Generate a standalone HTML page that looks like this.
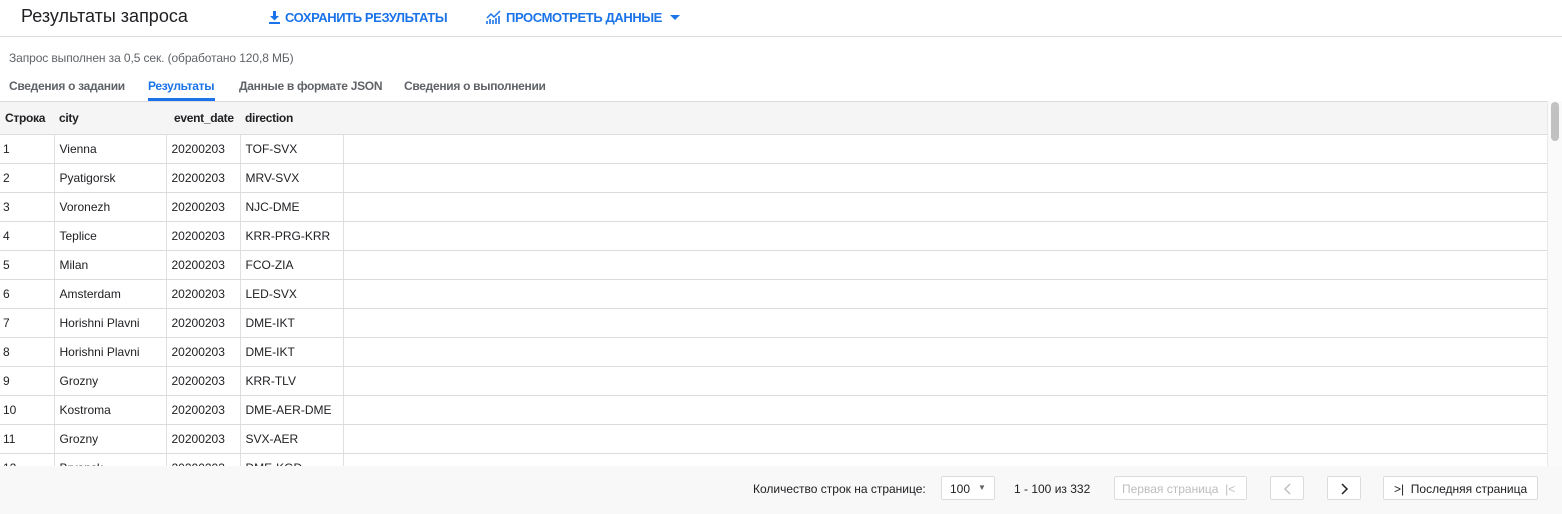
<!DOCTYPE html>
<html><head><meta charset="utf-8"><style>
*{box-sizing:border-box;margin:0;padding:0}
body{width:1562px;height:514px;overflow:hidden;background:#fff;font-family:"Liberation Sans",Roboto,sans-serif;color:#202124;position:relative}
.hdr{position:absolute;left:0;top:0;width:1562px;height:37px;border-bottom:1px solid #dadce0}
.title{position:absolute;left:21px;top:6px;font-size:18px;color:#202124}
.btn{position:absolute;top:10px;font-size:13px;color:#1a73e8;font-weight:bold;letter-spacing:-0.4px}
.info{position:absolute;left:9px;top:51px;font-size:12px;color:#5f6368;letter-spacing:-0.1px}
.tab{position:absolute;top:79px;font-size:12px;color:#5f6368;font-weight:bold;letter-spacing:-0.3px}
.tab.a{color:#1a73e8}
.ul{position:absolute;left:148px;top:98px;width:67px;height:3px;background:#1a73e8}
.tline{position:absolute;left:0;top:101px;width:1547px;height:1px;background:#dadce0}
table{position:absolute;left:0;top:102px;border-collapse:collapse;font-size:12px;width:1547px;table-layout:fixed}
th{background:#f5f5f5;height:32px;text-align:left;font-weight:bold;padding-left:5px;border-bottom:1px solid #dadce0;color:#202124;letter-spacing:-0.3px}
td{height:29px;border-bottom:1px solid #dadce0;border-right:1px solid #e0e0e0;padding-left:5px;color:#202124;white-space:nowrap;overflow:hidden}
td:first-child{padding-left:3px}
td:last-child{border-right:none}
.sb{position:absolute;left:1547px;top:101px;width:15px;height:365px;background:#fafafa;border-left:1px solid #e8e8e8}
.thumb{position:absolute;left:1551px;top:102px;width:8px;height:39px;background:#c1c1c1;border-radius:4px}
.ft{position:absolute;left:0;top:466px;width:1562px;height:48px;background:#f8f8f8;font-size:12px;color:#202124}
.ft span,.ft div{position:absolute}
.box{border:1px solid #dadce0;background:#fff;height:24px;top:10px;border-radius:2px}
</style></head><body>
<div class="hdr">
<div class="title">Результаты запроса</div>
<div class="btn" style="left:268px"><svg width="13" height="14" viewBox="0 0 13 14" style="vertical-align:-2px;margin-right:4px"><path d="M5 1h3v5h3l-4.5 4.5L2 6h3z" fill="#1a73e8"/><rect x="1" y="12" width="11" height="2" fill="#1a73e8"/></svg>СОХРАНИТЬ РЕЗУЛЬТАТЫ</div>
<div class="btn" style="left:486px"><svg width="15" height="14" viewBox="0 0 15 14" style="vertical-align:-2px;margin-right:5px"><path d="M1 8l4-4 3 3 6-6" stroke="#1a73e8" stroke-width="1.5" fill="none"/><path d="M1 14v-3M4 14v-5M7 14v-4M10 14v-6M13 14v-8" stroke="#1a73e8" stroke-width="1.6"/></svg>ПРОСМОТРЕТЬ ДАННЫЕ</div>
<svg style="position:absolute;left:670px;top:15px" width="10" height="6"><path d="M0 0h10L5 5z" fill="#1a73e8"/></svg>
</div>
<div class="info">Запрос выполнен за 0,5 сек. (обработано 120,8 МБ)</div>
<div class="tab" style="left:9px">Сведения о задании</div>
<div class="tab a" style="left:148px">Результаты</div>
<div class="tab" style="left:239px">Данные в формате JSON</div>
<div class="tab" style="left:404px">Сведения о выполнении</div>
<div class="ul"></div>
<div class="tline"></div>
<table>
<colgroup><col style="width:54px"><col style="width:112px"><col style="width:74px"><col style="width:103px"><col></colgroup>
<tr><th>Строка</th><th>city</th><th style="padding-left:8px">event_date</th><th>direction</th><th></th></tr>
<tr><td>1</td><td>Vienna</td><td>20200203</td><td>TOF-SVX</td><td></td></tr>
<tr><td>2</td><td>Pyatigorsk</td><td>20200203</td><td>MRV-SVX</td><td></td></tr>
<tr><td>3</td><td>Voronezh</td><td>20200203</td><td>NJC-DME</td><td></td></tr>
<tr><td>4</td><td>Teplice</td><td>20200203</td><td>KRR-PRG-KRR</td><td></td></tr>
<tr><td>5</td><td>Milan</td><td>20200203</td><td>FCO-ZIA</td><td></td></tr>
<tr><td>6</td><td>Amsterdam</td><td>20200203</td><td>LED-SVX</td><td></td></tr>
<tr><td>7</td><td>Horishni Plavni</td><td>20200203</td><td>DME-IKT</td><td></td></tr>
<tr><td>8</td><td>Horishni Plavni</td><td>20200203</td><td>DME-IKT</td><td></td></tr>
<tr><td>9</td><td>Grozny</td><td>20200203</td><td>KRR-TLV</td><td></td></tr>
<tr><td>10</td><td>Kostroma</td><td>20200203</td><td>DME-AER-DME</td><td></td></tr>
<tr><td>11</td><td>Grozny</td><td>20200203</td><td>SVX-AER</td><td></td></tr>
<tr><td>12</td><td>Bryansk</td><td>20200203</td><td>DME-KGD</td><td></td></tr>
</table>
<div class="sb"></div><div class="thumb"></div>
<div class="ft">
<span style="left:753px;top:16px">Количество строк на странице:</span>
<div class="box" style="left:941px;width:54px"><span style="left:8px;top:5px">100</span><span style="left:36px;top:6px;font-size:8px;color:#5f6368">▼</span></div>
<span style="left:1014px;top:16px">1 - 100 из 332</span>
<div class="box" style="left:1114px;width:133px;color:#bdbdbd"><span style="left:7px;top:5px">Первая страница&nbsp; |&lt;</span></div>
<div class="box" style="left:1270px;width:34px"><svg style="position:absolute;left:12px;top:6px" width="9" height="12"><path d="M7 1L2 6l5 5" stroke="#c0c0c0" stroke-width="1.5" fill="none"/></svg></div>
<div class="box" style="left:1327px;width:34px"><svg style="position:absolute;left:12px;top:6px" width="9" height="12"><path d="M2 1l5 5-5 5" stroke="#202124" stroke-width="1.5" fill="none"/></svg></div>
<div class="box" style="left:1383px;width:155px"><span style="left:10px;top:5px">&gt;|&nbsp; Последняя страница</span></div>
</div>
</body></html>
